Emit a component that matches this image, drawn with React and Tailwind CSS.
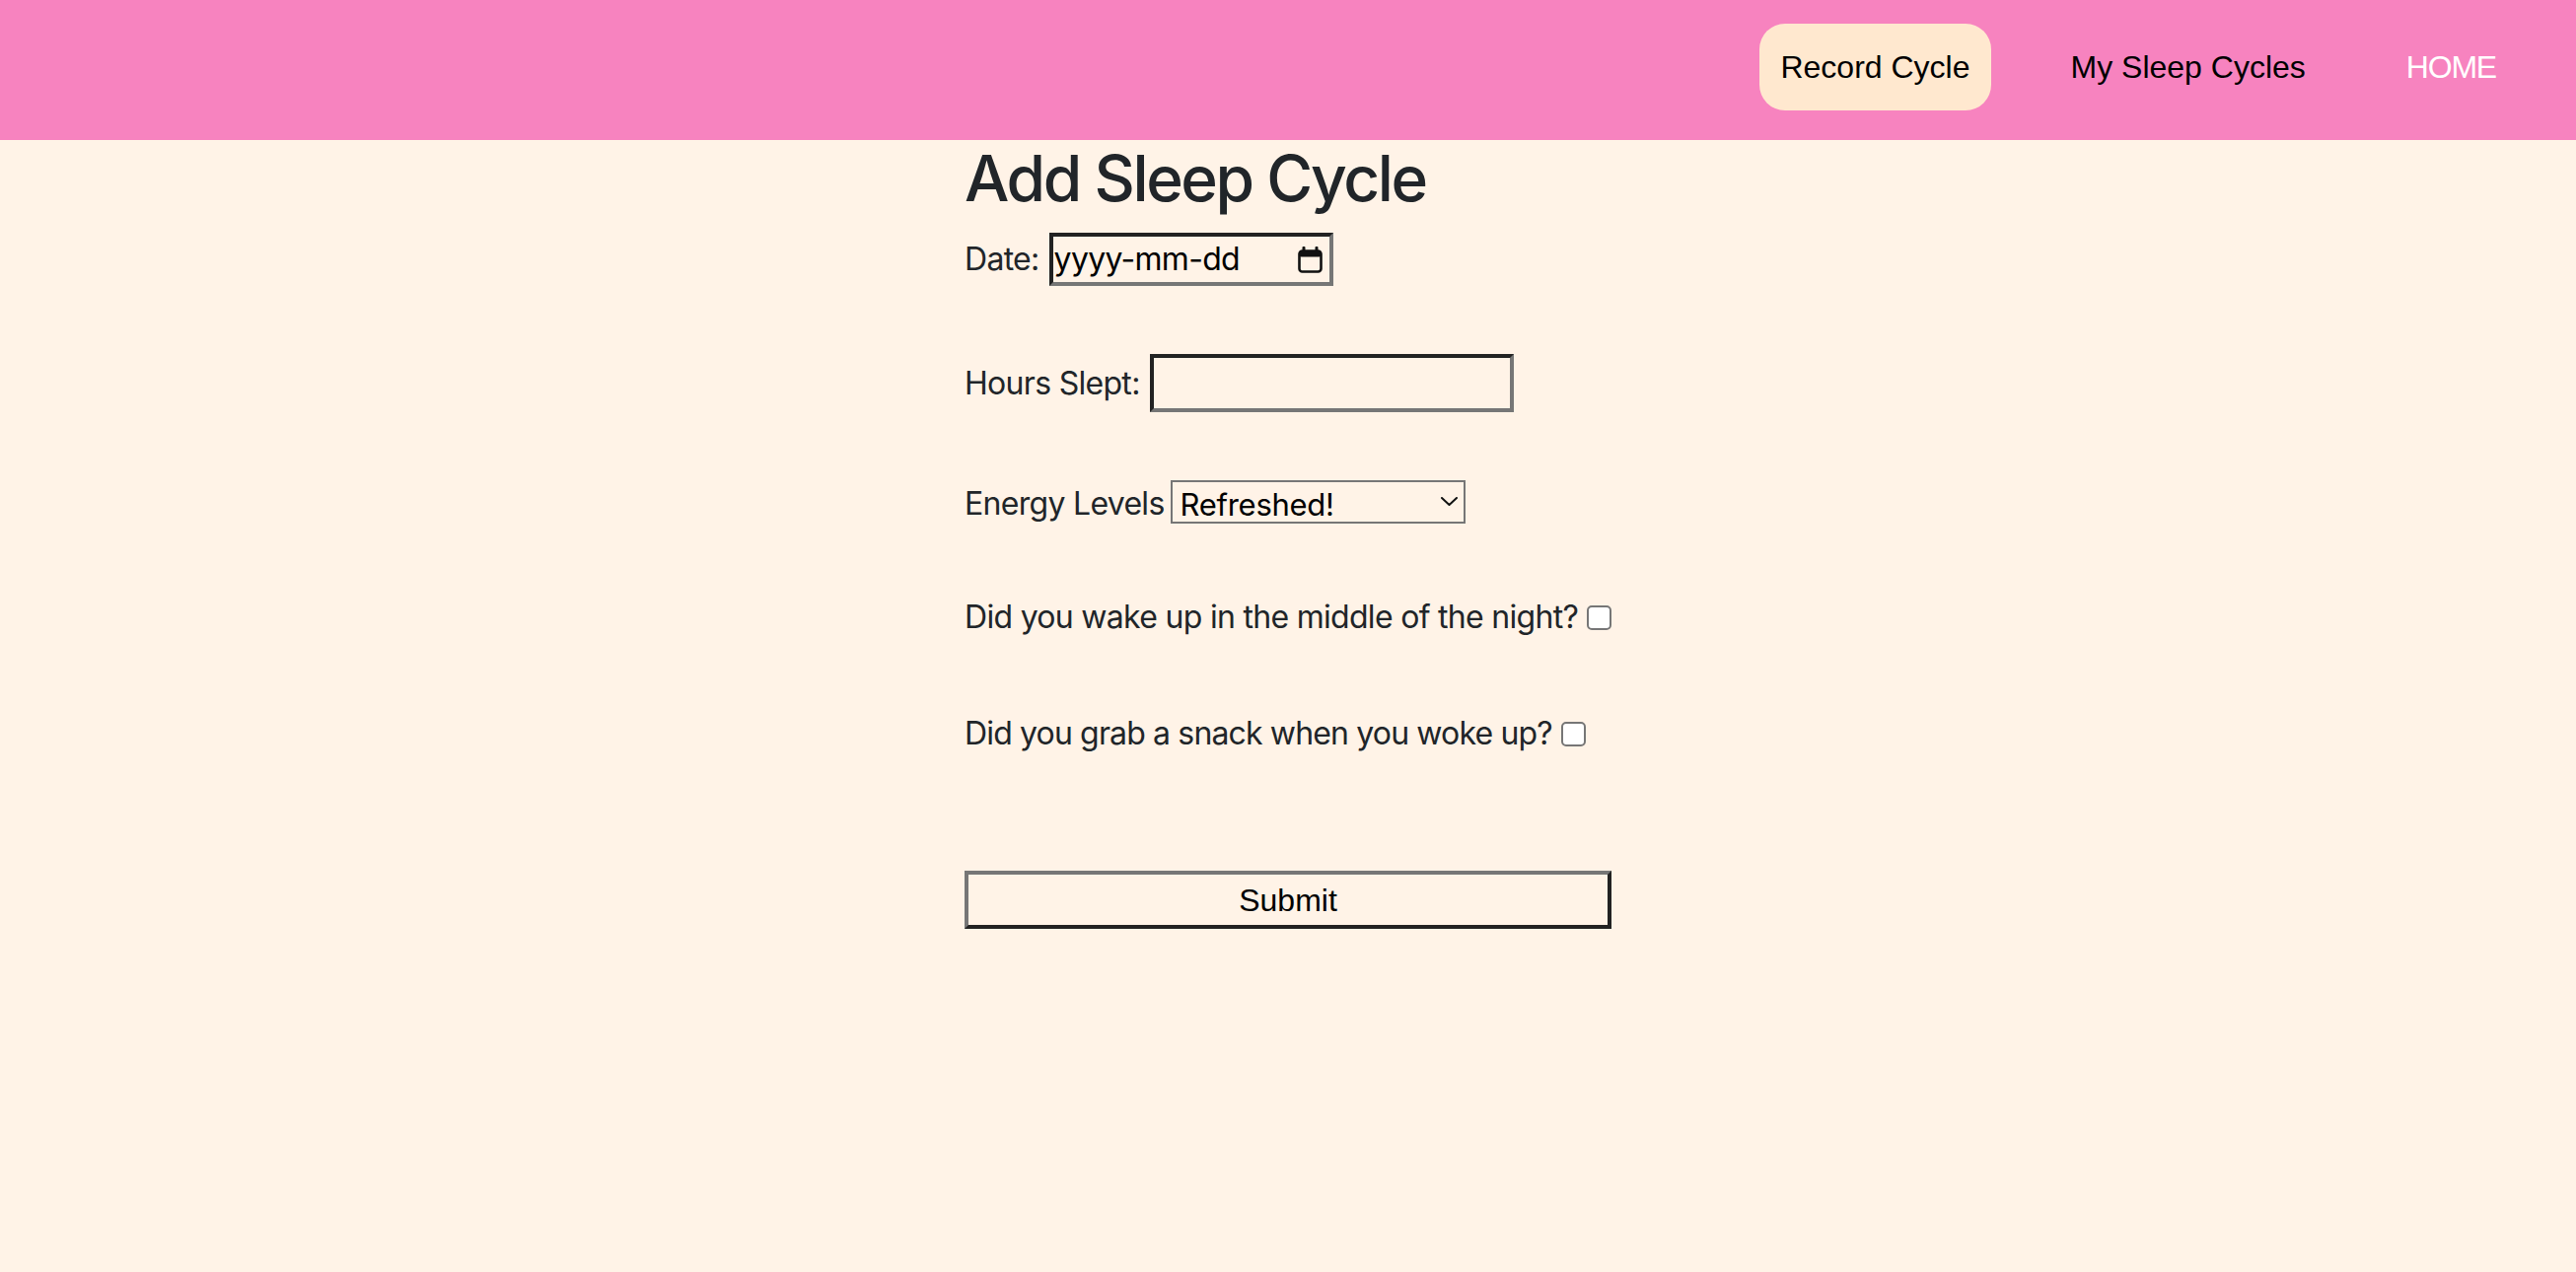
import React from "react";

const NAV_LINKS = [
  { label: "Record Cycle", active: true },
  { label: "My Sleep Cycles" },
  { label: "HOME", light: true },
];

function CalendarIcon() {
  return (
    <svg width="25" height="27" viewBox="0 0 25 27" fill="none">
      <rect x="4.5" y="0" width="3" height="6" rx="1" fill="#111" />
      <rect x="17.5" y="0" width="3" height="6" rx="1" fill="#111" />
      <rect x="1.5" y="4.5" width="22" height="21" rx="3" stroke="#111" strokeWidth="2.6" />
      <rect x="1.5" y="4.5" width="22" height="6" rx="2" fill="#111" />
    </svg>
  );
}

function Chevron() {
  return (
    <svg width="17" height="9" viewBox="0 0 17 9" fill="none">
      <path d="M1 1l7.5 7 7.5-7" stroke="#111" strokeWidth="2" strokeLinecap="round" strokeLinejoin="round" />
    </svg>
  );
}

function Navbar() {
  return (
    <nav className="h-[142px] bg-[#f783bf] flex justify-end items-start pt-[24px] pr-[60px] gap-[60px] font-['Liberation_Sans',Arial,sans-serif] text-[32px]">
      {NAV_LINKS.map((link) => (
        <a
          key={link.label}
          href="#"
          className={
            "h-[88px] px-[21px] flex items-center rounded-[26px] whitespace-nowrap " +
            (link.active ? "bg-[#ffe8cf] text-black" : link.light ? "text-white tracking-[-1.2px]" : "text-black")
          }
        >
          {link.label}
        </a>
      ))}
    </nav>
  );
}

function Checkbox() {
  return (
    <input
      type="checkbox"
      className="appearance-none w-[25px] h-[25px] rounded-[5px] border-2 border-[#767676] bg-white ml-[9px] shrink-0"
    />
  );
}

export default function App() {
  return (
    <div className="min-h-screen bg-[#fff3e7] font-['Inter','Noto_Sans',sans-serif] text-[#212529]">
      <Navbar />

      <main className="w-[656px] mx-auto">
        <h2 className="text-[64px] leading-[77px] font-medium tracking-[-2.4px] mb-[17px] whitespace-nowrap">
          Add Sleep Cycle
        </h2>

        <form className="flex flex-col text-[32px] tracking-[-0.7px] whitespace-nowrap">
          {/* Date */}
          <label className="h-[54px] flex items-center">
            <span>Date:</span>
            <div className="ml-[10px] w-[288px] h-[54px] flex items-center justify-between pl-[1px] pr-[7px] border-4 border-t-[#222] border-l-[#222] border-b-[#767676] border-r-[#767676] text-black">
              <span>yyyy-mm-dd</span>
              <CalendarIcon />
            </div>
          </label>

          {/* Hours */}
          <label className="mt-[69px] h-[59px] flex items-center">
            <span>Hours Slept:</span>
            <input
              type="text"
              className="ml-[10px] w-[369px] h-[59px] bg-transparent border-4 border-t-[#222] border-l-[#222] border-b-[#767676] border-r-[#767676] outline-none"
            />
          </label>

          {/* Energy */}
          <label className="mt-[71px] h-[44px] flex items-center">
            <span>Energy Levels</span>
            <div className="relative ml-[6px]">
              <select className="appearance-none w-[299px] h-[44px] bg-transparent border-2 border-[#767676] pl-[8px] text-[31px] tracking-[-0.3px] text-black outline-none">
                <option>Refreshed!</option>
                <option>Okay</option>
                <option>Tired</option>
              </select>
              <span className="absolute right-[8px] top-[17px] pointer-events-none">
                <Chevron />
              </span>
            </div>
          </label>

          {/* Woke up */}
          <label className="mt-[69px] h-[48px] flex items-center">
            <span>Did you wake up in the middle of the night?</span>
            <Checkbox />
          </label>

          <label className="mt-[70px] h-[48px] flex items-center">
            <span className="tracking-[-0.85px]">Did you grab a snack when you woke up?</span>
            <Checkbox />
          </label>

          <button
            type="button"
            className="mt-[115px] w-full h-[59px] border-4 border-t-[#767676] border-l-[#767676] border-b-[#222] border-r-[#222] bg-transparent text-black font-['Liberation_Sans',Arial,sans-serif] text-[32px] tracking-normal"
          >
            Submit
          </button>
        </form>
      </main>
    </div>
  );
}
